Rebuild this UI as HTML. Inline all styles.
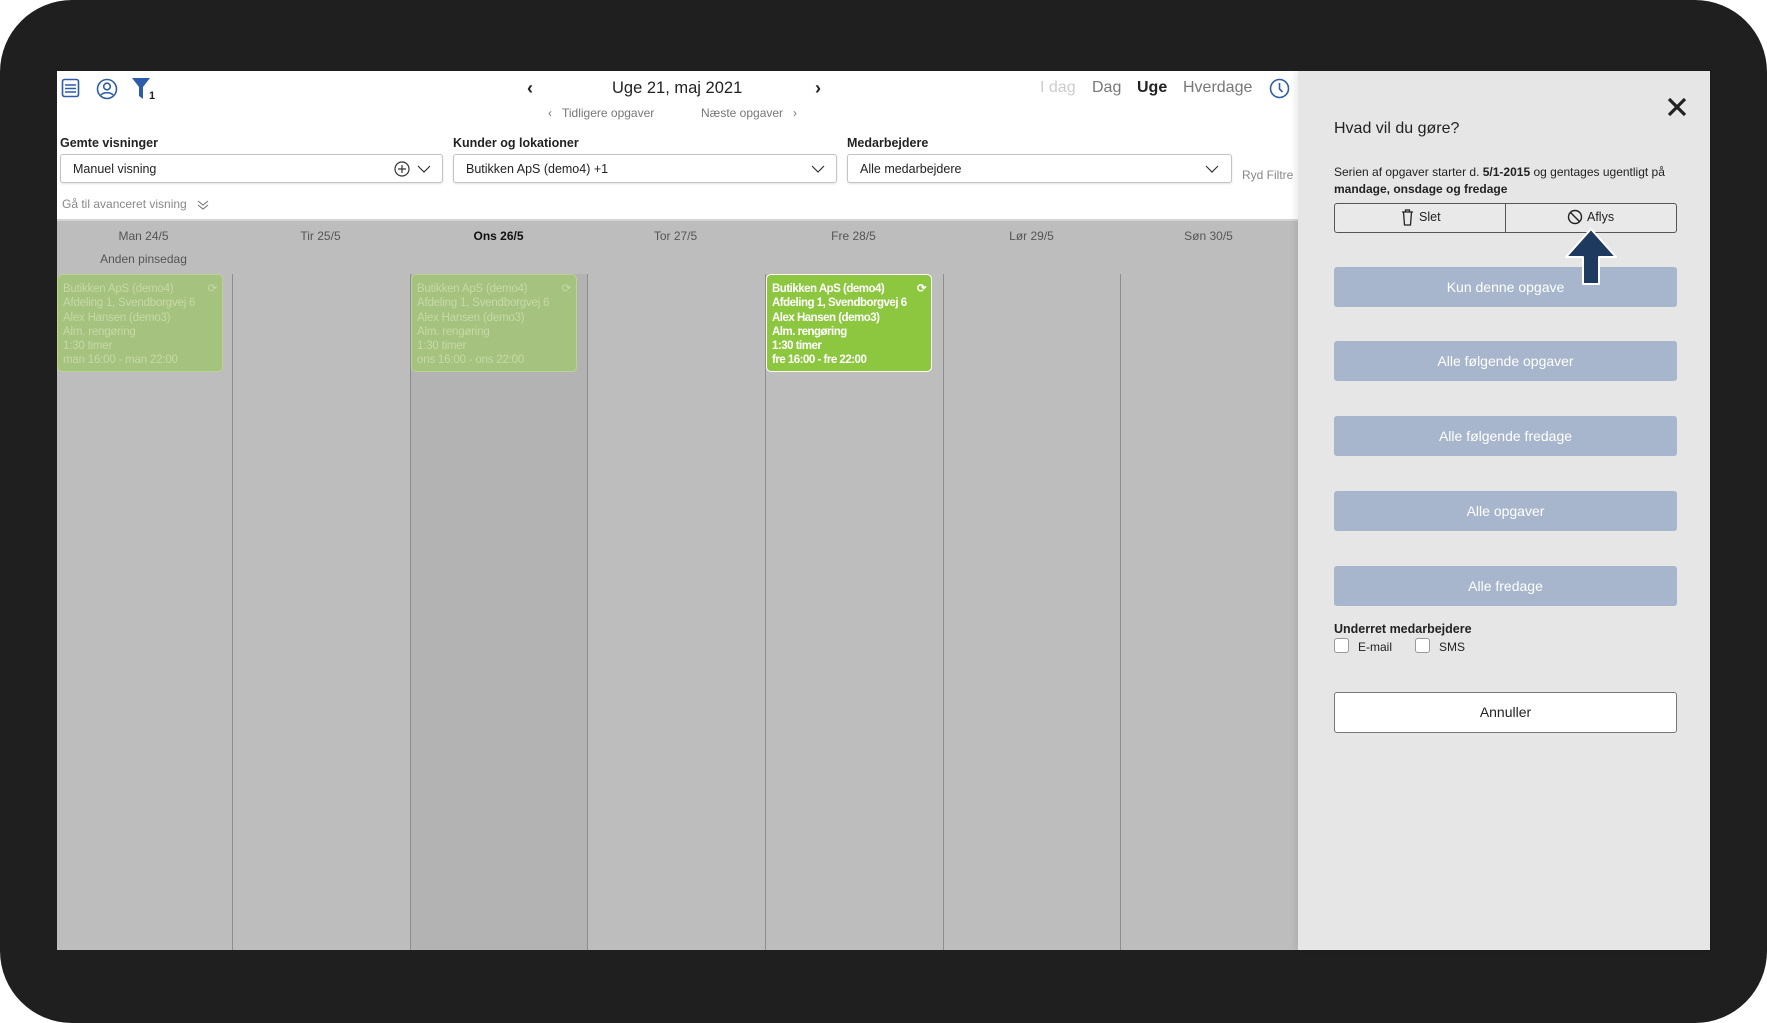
<!DOCTYPE html>
<html><head><meta charset="utf-8"><style>
*{box-sizing:border-box;margin:0;padding:0}
body{width:1767px;height:1023px;background:#fff;font-family:"Liberation Sans",sans-serif;position:relative;overflow:hidden;color:#222}
.frame{position:absolute;left:0;top:0;width:1767px;height:1023px;background:#201f20;border-radius:72px}
.app{position:absolute;left:57px;top:71px;width:1241px;height:879px;background:#fff}
.cal{position:absolute;left:57px;top:221px;width:1241px;height:729px;background:#bdbdbd}
.panel{position:absolute;left:1298px;top:71px;width:412px;height:879px;background:#e6e6e6;box-shadow:-3px 0 6px rgba(0,0,0,.08)}
.a{position:absolute;white-space:nowrap}
.inp{position:absolute;height:29px;border:1px solid #c4c4c4;border-radius:3px;background:#fff;font-size:12.5px;padding:7px 12px;box-shadow:0 1px 2px rgba(0,0,0,.12)}
.lbl{font-size:12.5px;font-weight:bold}
.vl{position:absolute;top:274px;width:1px;height:676px;background:#8e8e8e}
.day{position:absolute;top:229px;font-size:12px;color:#555;width:177px;text-align:center}
.ev{position:absolute;top:274px;width:166px;height:98px;border-radius:5px;font-size:11.5px;line-height:14.3px;padding:7px 5px;font-weight:bold;white-space:nowrap;overflow:hidden;letter-spacing:-0.2px}
.evf{background:#a6c27f;color:#c6d9a6;border:1px solid #b8d394;font-weight:normal}
.evg{background:#8dc63f;color:#fff;border:1.5px solid #fff}
.bb{position:absolute;left:1334px;width:343px;height:40px;background:#a7b6cc;border-radius:3px;color:#fff;font-size:14px;text-align:center;line-height:40px}
.cb{position:absolute;width:15px;height:15px;border:1px solid #999;border-radius:3px;background:#fff}
</style></head><body>
<div class="frame"></div>
<div class="app"></div>
<div class="cal"></div>
<div class="a" style="left:410px;top:274px;width:177px;height:676px;background:#b3b3b3"></div>
<div class="a" style="left:57px;top:219px;width:1241px;height:2px;background:#d4d4d4"></div>
<svg class="a" style="left:61px;top:78px" width="20" height="20" viewBox="0 0 20 20" fill="none" stroke="#2d5ca8" stroke-width="1.6"><rect x="1.5" y="1.5" width="16" height="17" rx="2"/><path d="M4 7h11M4 10.5h11M4 14h11"/></svg>
<svg class="a" style="left:96px;top:78px" width="22" height="22" viewBox="0 0 22 22" fill="none" stroke="#2d5ca8" stroke-width="1.6"><circle cx="11" cy="11" r="9.5"/><circle cx="11" cy="8.5" r="3.3"/><path d="M5 17c2-3 10-3 12 0"/></svg>
<svg class="a" style="left:132px;top:77px" width="26" height="24" viewBox="0 0 26 24"><path d="M0 1h18l-7 9v12l-4-3v-9z" fill="#2d5ca8"/><text x="17" y="22" font-size="11" font-weight="bold" fill="#222" font-family="Liberation Sans">1</text></svg>
<div class="a" style="left:527px;top:78px;font-size:18px;font-weight:bold">‹</div>
<div class="a" style="left:612px;top:79px;font-size:16.5px">Uge 21, maj 2021</div>
<div class="a" style="left:815px;top:78px;font-size:18px;font-weight:bold">›</div>
<div class="a" style="left:548px;top:106px;font-size:12px;color:#777">‹ &nbsp;&nbsp;Tidligere opgaver</div>
<div class="a" style="left:701px;top:106px;font-size:12px;color:#777">Næste opgaver &nbsp;&nbsp;›</div>
<div class="a" style="left:1040px;top:79px;font-size:16px;color:#ccc">I dag</div>
<div class="a" style="left:1092px;top:79px;font-size:16px;color:#777">Dag</div>
<div class="a" style="left:1137px;top:79px;font-size:16px;font-weight:bold">Uge</div>
<div class="a" style="left:1183px;top:79px;font-size:16px;color:#777">Hverdage</div>
<svg class="a" style="left:1269px;top:78px" width="21" height="21" viewBox="0 0 21 21" fill="none" stroke="#2d5ca8" stroke-width="1.6"><circle cx="10.5" cy="10.5" r="9"/><path d="M10.5 5v6l3 3"/></svg>
<div class="a lbl" style="left:60px;top:136px">Gemte visninger</div>
<div class="a lbl" style="left:453px;top:136px">Kunder og lokationer</div>
<div class="a lbl" style="left:847px;top:136px">Medarbejdere</div>
<div class="inp" style="left:60px;top:154px;width:383px">Manuel visning</div>
<div class="inp" style="left:453px;top:154px;width:384px">Butikken ApS (demo4) +1</div>
<div class="inp" style="left:847px;top:154px;width:385px">Alle medarbejdere</div>
<svg class="a" style="left:394px;top:161px" width="40" height="16" viewBox="0 0 40 16" fill="none" stroke="#333" stroke-width="1.2"><circle cx="8" cy="8" r="7"/><path d="M8 4v8M4 8h8M24 5l6 6 6-6"/></svg>
<svg class="a" style="left:810px;top:163px" width="16" height="12" viewBox="0 0 16 12" fill="none" stroke="#333" stroke-width="1.2"><path d="M2 3l6 6 6-6"/></svg>
<svg class="a" style="left:1204px;top:163px" width="16" height="12" viewBox="0 0 16 12" fill="none" stroke="#333" stroke-width="1.2"><path d="M2 3l6 6 6-6"/></svg>
<div class="a" style="left:1242px;top:168px;font-size:12px;color:#888">Ryd Filtre</div>
<div class="a" style="left:62px;top:197px;font-size:12px;color:#888">Gå til avanceret visning</div>
<svg class="a" style="left:196px;top:198px" width="14" height="14" viewBox="0 0 14 14" fill="none" stroke="#777" stroke-width="1.1"><path d="M2 3l5 4 5-4M2 7l5 4 5-4"/></svg>
<div class="day" style="left:55px">Man 24/5</div>
<div class="day" style="left:232px">Tir 25/5</div>
<div class="day" style="left:410px;color:#111;font-weight:bold">Ons 26/5</div>
<div class="day" style="left:587px">Tor 27/5</div>
<div class="day" style="left:765px">Fre 28/5</div>
<div class="day" style="left:943px">Lør 29/5</div>
<div class="day" style="left:1120px">Søn 30/5</div>
<div class="day" style="left:55px;top:252px">Anden pinsedag</div>
<div class="vl" style="left:232px"></div><div class="vl" style="left:410px"></div><div class="vl" style="left:587px"></div><div class="vl" style="left:765px"></div><div class="vl" style="left:943px"></div><div class="vl" style="left:1120px"></div>
<div class="ev evf" style="left:57px">Butikken ApS (demo4)<span style="float:right">⟳</span><br>Afdeling 1, Svendborgvej 6<br>Alex Hansen (demo3)<br>Alm. rengøring<br>1:30 timer<br>man 16:00 - man 22:00</div>
<div class="ev evf" style="left:411px">Butikken ApS (demo4)<span style="float:right">⟳</span><br>Afdeling 1, Svendborgvej 6<br>Alex Hansen (demo3)<br>Alm. rengøring<br>1:30 timer<br>ons 16:00 - ons 22:00</div>
<div class="ev evg" style="left:766px;letter-spacing:-0.5px">Butikken ApS (demo4)<span style="float:right">⟳</span><br>Afdeling 1, Svendborgvej 6<br>Alex Hansen (demo3)<br>Alm. rengøring<br>1:30 timer<br>fre 16:00 - fre 22:00</div>
<div class="panel"></div>
<svg class="a" style="left:1667px;top:97px" width="20" height="20" viewBox="0 0 20 20" stroke="#222" stroke-width="3.2"><path d="M2 2l16 16M18 2L2 18"/></svg>
<div class="a" style="left:1334px;top:120px;font-size:16px">Hvad vil du gøre?</div>
<div class="a" style="left:1334px;top:164px;font-size:12px;line-height:17px">Serien af opgaver starter d. <b>5/1-2015</b> og gentages ugentligt på<br><b>mandage, onsdage og fredage</b></div>
<div class="a" style="left:1334px;top:203px;width:343px;height:30px;border:1px solid #555;border-radius:3px;background:#e9e9e9"></div>
<div class="a" style="left:1505px;top:203px;width:1px;height:30px;background:#555"></div>
<svg class="a" style="left:1401px;top:209px" width="13" height="17" viewBox="0 0 13 17" fill="none" stroke="#222" stroke-width="1.3"><path d="M1 3h11M4.5 3V1h4v2M2.5 3l1 13h6l1-13"/></svg>
<div class="a" style="left:1419px;top:210px;font-size:12.5px">Slet</div>
<svg class="a" style="left:1567px;top:209px" width="16" height="16" viewBox="0 0 16 16" fill="none" stroke="#222" stroke-width="1.4"><circle cx="8" cy="8" r="6.5"/><path d="M3.5 3.5l9 9"/></svg>
<div class="a" style="left:1587px;top:210px;font-size:12.5px">Aflys</div>
<div class="bb" style="top:267px">Kun denne opgave</div>
<div class="bb" style="top:341px">Alle følgende opgaver</div>
<div class="bb" style="top:416px">Alle følgende fredage</div>
<div class="bb" style="top:491px">Alle opgaver</div>
<div class="bb" style="top:566px">Alle fredage</div>
<svg class="a" style="left:1562px;top:226px" width="58" height="62" viewBox="0 0 58 62"><path d="M29 3L54 31H37V58H21V31H4z" fill="#1f3a5f" stroke="#fff" stroke-width="2" stroke-linejoin="round"/></svg>
<div class="a" style="left:1334px;top:622px;font-size:12.5px;font-weight:bold">Underret medarbejdere</div>
<div class="cb" style="left:1334px;top:638px"></div>
<div class="a" style="left:1358px;top:640px;font-size:12px">E-mail</div>
<div class="cb" style="left:1415px;top:638px"></div>
<div class="a" style="left:1439px;top:640px;font-size:12px">SMS</div>
<div class="a" style="left:1334px;top:692px;width:343px;height:41px;border:1px solid #777;border-radius:3px;background:#fff;text-align:center;line-height:39px;font-size:14px">Annuller</div>
</body></html>
